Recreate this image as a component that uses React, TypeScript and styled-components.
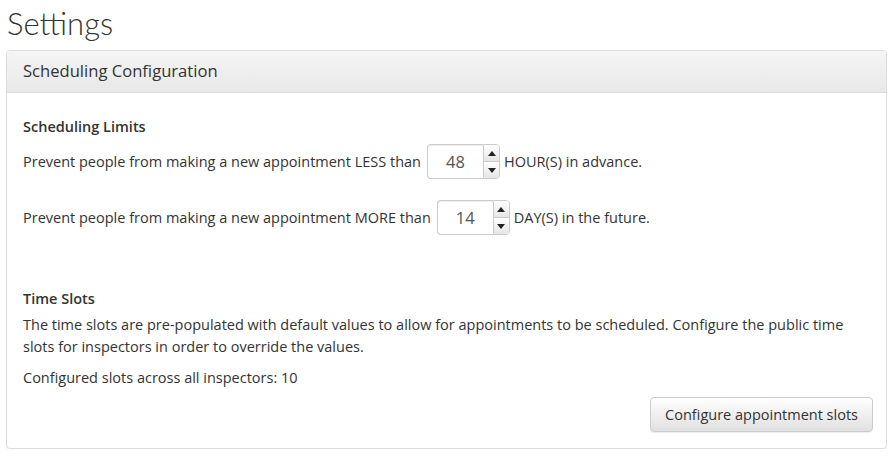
import React from "react";
import styled, { createGlobalStyle } from "styled-components";

const Global = createGlobalStyle`
  html, body { margin: 0; padding: 0; background: #fff; }
  body { font-family: "Open Sans", "Segoe UI", sans-serif; color: #333; font-size: 14.5px; }
  * { box-sizing: border-box; }
`;

const Page = styled.div`
  padding: 0 9px 0 6px;
`;

const Title = styled.h1`
  margin: 0;
  padding: 3px 0 0 1px;
  height: 50px;
  font-family: "Lato", sans-serif;
  font-weight: 300;
  font-size: 31px;
  line-height: 40px;
  color: #333;
`;

const Panel = styled.div`
  border: 1px solid #ddd;
  border-radius: 4px;
  box-shadow: 0 1px 1px rgba(0, 0, 0, 0.05);
  overflow: hidden;
`;

const PanelHeading = styled.div`
  height: 42px;
  padding: 0 16px 3px;
  display: flex;
  align-items: center;
  font-size: 16.6px;
  background: linear-gradient(to bottom, #f5f5f5 0%, #e8e8e8 100%);
  border-bottom: 1px solid #ddd;
`;

const PanelBody = styled.div`
  padding: 24px 13px 16px 16px;
`;

const SectionTitle = styled.h4<{ $mb: number }>`
  margin: 0 0 ${(p) => p.$mb}px;
  font-size: 14.5px;
  font-weight: 600;
  line-height: 20px;
`;

const LimitRow = styled.div<{ $gap: number }>`
  display: flex;
  align-items: center;
  margin-bottom: ${(p) => p.$gap}px;
  line-height: 20px;
`;

const Spinner = styled.div`
  display: inline-flex;
  margin: 0 4px 0 6px;
  height: 35px;
`;

const NumberBox = styled.div`
  width: 56px;
  height: 35px;
  border: 1px solid #ccc;
  border-right: none;
  border-radius: 4px 0 0 4px;
  display: flex;
  align-items: center;
  justify-content: center;
  font-size: 16.5px;
  color: #555;
  box-shadow: inset 0 1px 1px rgba(0, 0, 0, 0.075);
`;

const Arrows = styled.div`
  display: flex;
  flex-direction: column;
  width: 17px;
  border: 1px solid #ccc;
  border-radius: 0 4px 4px 0;
  overflow: hidden;
`;

const ArrowBtn = styled.div<{ $down?: boolean }>`
  flex: 1;
  display: flex;
  align-items: center;
  justify-content: center;
  background: linear-gradient(to bottom, #fff 0%, #e6e6e6 100%);
  border-top: ${(p) => (p.$down ? "1px solid #ccc" : "none")};
`;

const Triangle = styled.span<{ $down?: boolean }>`
  width: 0;
  height: 0;
  border-left: 4px solid transparent;
  border-right: 4px solid transparent;
  ${(p) => (p.$down ? "border-top: 5px solid #222;" : "border-bottom: 5px solid #222;")}
`;

const Para = styled.p<{ $mb: number }>`
  margin: 0 0 ${(p) => p.$mb}px;
  line-height: 22px;
`;

const Footer = styled.div`
  display: flex;
  justify-content: flex-end;
  padding-top: 8px;
`;

const Button = styled.button`
  font-family: inherit;
  font-size: 14.5px;
  color: #333;
  height: 35px;
  padding: 0 14px;
  border: 1px solid #ccc;
  border-radius: 4px;
  background: linear-gradient(to bottom, #fff 0%, #e0e0e0 100%);
  box-shadow: inset 0 1px 0 rgba(255, 255, 255, 0.15), 0 1px 1px rgba(0, 0, 0, 0.075);
  cursor: pointer;
`;

function NumberSpinner({ value }: { value: number }) {
  return (
    <Spinner>
      <NumberBox>{value}</NumberBox>
      <Arrows>
        <ArrowBtn>
          <Triangle />
        </ArrowBtn>
        <ArrowBtn $down>
          <Triangle $down />
        </ArrowBtn>
      </Arrows>
    </Spinner>
  );
}

export default function App() {
  return (
    <>
      <Global />
      <Page>
        <Title>Settings</Title>
        <Panel>
          <PanelHeading>Scheduling Configuration</PanelHeading>
          <PanelBody>
            <SectionTitle $mb={7}>Scheduling Limits</SectionTitle>
            <LimitRow $gap={21}>
              Prevent people from making a new appointment LESS than
              <NumberSpinner value={48} />
              HOUR(S) in advance.
            </LimitRow>
            <LimitRow $gap={54}>
              Prevent people from making a new appointment MORE than
              <NumberSpinner value={14} />
              DAY(S) in the future.
            </LimitRow>
            <SectionTitle $mb={5}>Time Slots</SectionTitle>
            <Para $mb={9}>
              The time slots are pre-populated with default values to allow for appointments to be scheduled.
              Configure the public time slots for inspectors in order to override the values.
            </Para>
            <Para $mb={0}>Configured slots across all inspectors: 10</Para>
            <Footer>
              <Button>Configure appointment slots</Button>
            </Footer>
          </PanelBody>
        </Panel>
      </Page>
    </>
  );
}
